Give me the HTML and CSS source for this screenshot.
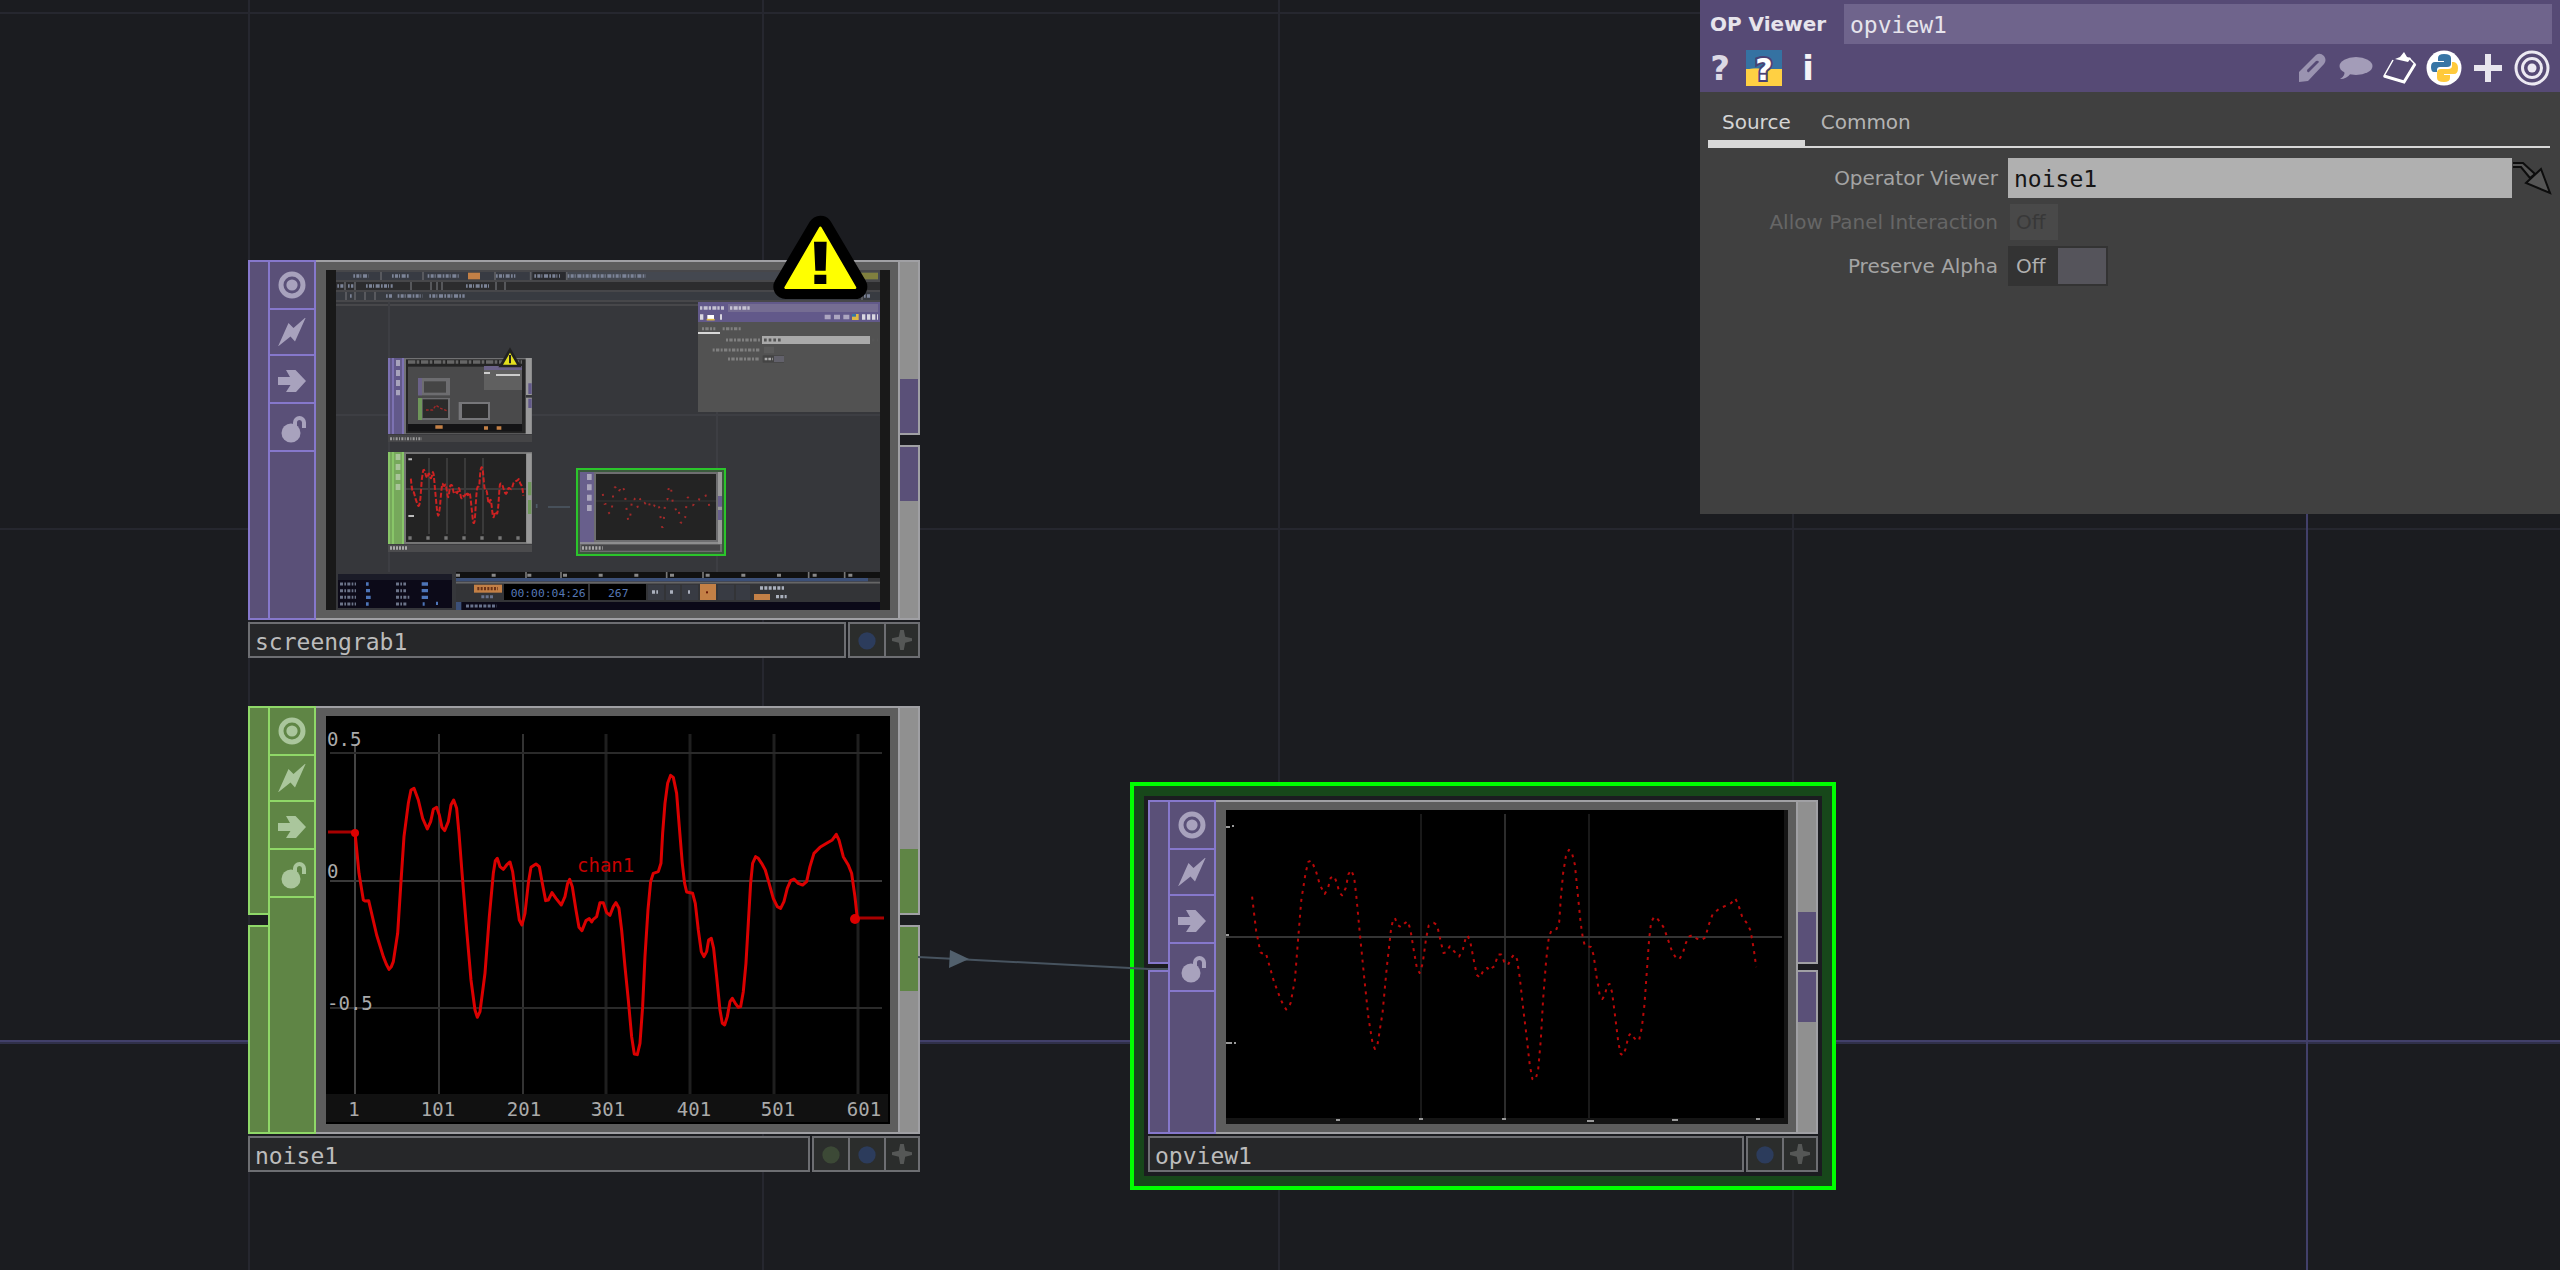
FILE: index.html
```html
<!DOCTYPE html>
<html lang="en">
<head>
<meta charset="utf-8">
<title>Network editor</title>
<link rel="stylesheet" href="styles.css">
</head>
<body>
<svg class="defs" aria-hidden="true">
  <defs>
    <symbol id="i-viewer" viewBox="0 0 28 28"><circle cx="14" cy="14" r="11" fill="none" stroke="currentColor" stroke-width="5"/><circle cx="14" cy="14" r="5.6" fill="currentColor"/></symbol>
    <symbol id="i-bolt" viewBox="0 0 28 28"><path d="M28 -1L17 23.500L12.500 18.500L0 28.500L10.500 5L15.500 10Z" fill="currentColor"/></symbol>
    <symbol id="i-arrow" viewBox="0 0 28 28"><path d="M0 10H12L8 3H17.500L28 14L18 25H8L12.500 18H0Z" fill="currentColor"/></symbol>
    <symbol id="i-lock" viewBox="0 0 28 28"><circle cx="13" cy="18" r="9.500" fill="currentColor"/><path d="M17 11V7.500a4.500 4.500 0 0 1 9 0V13" fill="none" stroke="currentColor" stroke-width="4"/></symbol>
    <symbol id="i-dot" viewBox="0 0 22 22"><circle cx="11" cy="12" r="9.500" fill="currentColor"/></symbol>
    <symbol id="i-star" viewBox="0 0 22 22"><path d="M9 0H13L14.500 7.500L22 9V12L14.500 14L13 22H9L7.500 14L0 12V9L7.500 7.500Z" fill="currentColor"/></symbol>
    <path id="curve" fill="none" stroke-linejoin="round" vector-effect="non-scaling-stroke" d="M87 349L99 472L112 552L117 555L128 554L152 657L172 722L181 745L189 760L196 752L202 737L215 652L224 512L234 362L247 262L255 222L264 217L277 252L290 307L304 339L314 317L322 280L332 274L340 297L348 334L356 344L367 317L375 267L383 252L392 277L399 352L409 482L422 642L435 792L447 882L454 904L462 887L477 772L490 602L502 472L508 434L514 427L522 452L532 460L542 447L552 438L560 467L570 542L580 612L588 627L597 592L607 502L615 454L630 444L640 452L650 507L659 554L667 552L678 530L690 547L706 567L717 542L725 502L731 490L739 512L750 582L759 634L768 644L780 614L790 608L797 618L802 610L812 602L822 560L832 560L842 590L852 598L862 572L870 560L879 577L887 642L897 752L907 852L917 962L925 1014L934 1016L942 982L950 872L957 722L966 582L974 497L982 472L997 467L1005 442L1010 352L1017 262L1025 202L1034 178L1042 184L1052 232L1060 332L1069 442L1076 502L1082 528L1100 532L1108 562L1117 642L1126 707L1134 722L1142 707L1148 672L1156 667L1163 697L1172 782L1182 882L1189 922L1196 927L1204 902L1212 857L1219 847L1228 862L1237 874L1244 872L1252 827L1260 742L1267 622L1274 502L1280 442L1289 422L1297 427L1307 442L1318 462L1328 497L1342 547L1354 572L1364 577L1374 557L1384 517L1394 494L1404 489L1417 502L1430 507L1442 497L1452 452L1464 412L1482 394L1502 382L1519 372L1531 355L1539 372L1552 422L1567 447L1577 472L1587 542L1594 606"/>
  </defs>
</svg>

<main class="network">
  <section class="selection">
    <article class="node node-top">
      <div class="node-main">
        <div class="inputs"><span class="port"></span><span class="port"></span></div>
        <div class="toolbar">
          <button aria-label="Viewer active"><svg><use href="#i-viewer"/></svg></button>
          <button aria-label="Bypass"><svg><use href="#i-bolt"/></svg></button>
          <button aria-label="Cook"><svg><use href="#i-arrow"/></svg></button>
          <button aria-label="Lock"><svg><use href="#i-lock"/></svg></button>
        </div>
        <div class="body">
          <svg class="viewer" viewBox="0 0 562 314">
            <rect width="562" height="314" fill="#000"/>
            <path d="M0 308H562V314H0ZM558 0H562V314H558Z" fill="#151515"/>
            <path d="M195 4V308M363 4V308" stroke="#191919" stroke-width="2"/>
            <path d="M279 4V308" stroke="#2c2c2c" stroke-width="2"/>
            <path d="M0 127H556" stroke="#343434" stroke-width="2"/>
            <use href="#curve" transform="translate(-3 -9) scale(.3345 .2743)" stroke="#b80808" stroke-width="2" stroke-dasharray="3 5"/>
            <path d="M0 17H4M6 16H8M0 125H3M0 233H6M8 233H10M110 310H114M193 309H197M276 309H280M361 311H368M446 310H452M530 309H534" stroke="#999" stroke-width="2"/>
          </svg>
        </div>
        <div class="outputs"><span class="port"></span><span class="port"></span></div>
      </div>
      <div class="node-foot">
        <div class="name">opview1</div>
        <div class="flags">
          <button class="blue" aria-label="Display"><svg><use href="#i-dot"/></svg></button>
          <button class="grey" aria-label="Activate viewer"><svg><use href="#i-star"/></svg></button>
        </div>
      </div>
    </article>
  </section>

  <article class="node node-top node-grab">
    <div class="node-main">
      <div class="inputs"><span class="port"></span></div>
      <div class="toolbar">
        <button aria-label="Viewer active"><svg><use href="#i-viewer"/></svg></button>
        <button aria-label="Bypass"><svg><use href="#i-bolt"/></svg></button>
        <button aria-label="Cook"><svg><use href="#i-arrow"/></svg></button>
        <button aria-label="Lock"><svg><use href="#i-lock"/></svg></button>
      </div>
      <div class="body">
        <svg class="viewer" viewBox="0 0 1692 1020">
          <rect width="1692" height="1020" fill="#191919"/>
          <rect x="30" width="1632" height="1020" fill="#36373b"/>
          <!-- menu and pane bars -->
          <path d="M30 6H1662V30H30Z" fill="#383b43"/><path d="M720 6H1662V30H720Z" fill="#444850"/><path d="M620 6H720V30H620Z" fill="#2a2b2f"/>
          <path d="M30 36H1662V60H30Z" fill="#2c2c2e"/>
          <path d="M30 66H1662V90H30Z" fill="#383b41"/>
          <path d="M30 3H1662M30 33H1662M30 63H1662M30 93H1662M30 105H1662" stroke="#4d4d50" stroke-width="4"/>
          <path d="M165 6V30M291 6V30M507 6V30M614 6V30M722 6V30M57 36V60M87 36V60M255 36V60M315 36V60M333 36V60M348 36V60M510 36V60M537 36V60M60 66V90M87 66V90M117 66V90M147 66V90M1608 66V90" stroke="#5f6065" stroke-width="5"/>
          <rect x="426" y="8" width="36" height="20" fill="#c38046"/>
          <rect x="1590" y="8" width="66" height="20" fill="#80803f"/>
          <g stroke="#7c8498" stroke-width="10" fill="none" stroke-dasharray="5 4 9 3 3 5 12 4">
            <path d="M82 18H128M198 18H252M305 18H398M510 18H568M625 18H702M725 18H960"/>
            <path d="M34 48H52M66 48H82M120 48H200M420 48H492"/>
            <path d="M72 78H80M180 78H200M215 78H290M310 78H416M1614 78H1632"/>
          </g>
          <!-- grid -->
          <path d="M189 95V906M1173 426V906M30 435H1662" stroke="#3d3e43" stroke-width="6"/>
          <!-- nested screengrab node -->
          <rect x="186" y="264" width="432" height="228" fill="#717173"/><rect x="186" y="264" width="48" height="228" fill="#62598a"/>
          <path d="M189 264V492M201 264V492M231 264V492" stroke="#8278ba" stroke-width="5"/>
          <rect x="240" y="268" width="362" height="222" fill="#242424"/><rect x="246" y="290" width="342" height="172" fill="#4a4a4b"/>
          <path d="M246 276H588" stroke="#666" stroke-width="10" stroke-dasharray="22 4 8 5"/>
          <rect x="276" y="324" width="96" height="52" fill="#6d6d70"/><rect x="276" y="324" width="12" height="52" fill="#6b6288"/><rect x="294" y="334" width="66" height="34" fill="#454545"/>
          <rect x="276" y="384" width="96" height="66" fill="#6d6d70"/><rect x="276" y="384" width="12" height="66" fill="#6f975a"/><rect x="290" y="388" width="76" height="56" fill="#2b2b2b"/>
          <path d="M300 420h20l10-14 12 8 20 8" stroke="#a02828" stroke-width="4" fill="none" stroke-dasharray="8 5"/>
          <rect x="398" y="396" width="94" height="54" fill="#77777a"/><rect x="408" y="402" width="78" height="42" fill="#2c2c2c"/>
          <rect x="474" y="288" width="114" height="72" fill="#606060"/><rect x="474" y="288" width="114" height="12" fill="#6b6288"/>
          <path d="M474 309H492M510 315H582" stroke="#ccc" stroke-width="6"/>
          <rect x="246" y="462" width="342" height="22" fill="#141416"/><path d="M328 471H350M474 474H486M512 474H526" stroke="#c38046" stroke-width="10"/>
          <path d="M608 264V492" stroke="#999" stroke-width="18"/><path d="M612 340V372M612 386V414" stroke="#62598a" stroke-width="10"/><path d="M600 379H618" stroke="#36373b" stroke-width="8"/>
          <path d="M216 270V376" stroke="#a8a4bd" stroke-width="12" stroke-dasharray="18 12"/>
          <rect x="186" y="494" width="432" height="22" fill="#454547"/><path d="M192 506H288" stroke="#999" stroke-width="9" stroke-dasharray="6 4 3 4"/>
          <path d="M552 240L580 288H524Z" fill="#e4e01e" stroke="#222" stroke-width="8"/><path d="M552 255V280" stroke="#222" stroke-width="6"/>
          <!-- nested noise node -->
          <rect x="186" y="546" width="432" height="276" fill="#757575"/><rect x="186" y="546" width="48" height="276" fill="#76a85b"/>
          <path d="M189 546V822M201 546V822M231 546V822" stroke="#8dcc6c" stroke-width="5"/>
          <rect x="240" y="552" width="360" height="264" fill="#232323"/>
          <path d="M309 564V792M363 564V792M417 564V792M471 564V792M240 657H600" stroke="#3a3a3a" stroke-width="6"/>
          <use href="#curve" transform="translate(235 556) scale(.224 .2)" stroke="#cc2222" stroke-width="2" stroke-dasharray="5 2"/>
          <path d="M247 804H592" stroke="#777" stroke-width="10" stroke-dasharray="10 44"/><path d="M247 568H258M247 738H264" stroke="#bbb" stroke-width="6"/>
          <path d="M216 552V666" stroke="#a9c49a" stroke-width="14" stroke-dasharray="18 12"/>
          <path d="M609 550V820" stroke="#989898" stroke-width="16"/><path d="M611 636V676M611 690V732" stroke="#6f975a" stroke-width="10"/>
          <rect x="186" y="824" width="432" height="22" fill="#4b4b4d"/><path d="M192 834H246" stroke="#aaa" stroke-width="10" stroke-dasharray="6 3"/>
          <path d="M666 711H732M632 702V714" stroke="#4d5a66" stroke-width="5"/>
          <!-- nested viewer node -->
          <rect x="753" y="597" width="444" height="258" fill="#3a5a3c" stroke="#2bc52b" stroke-width="6"/>
          <rect x="762" y="606" width="426" height="240" fill="#6e6e70"/><rect x="762" y="606" width="42" height="216" fill="#685f8c"/>
          <path d="M790 612V732" stroke="#aaa5bc" stroke-width="14" stroke-dasharray="18 13"/>
          <rect x="810" y="612" width="360" height="198" fill="#232323"/><path d="M810 693H1170" stroke="#303030" stroke-width="5"/>
          <use href="#curve" transform="translate(812 619) scale(.212 .15)" stroke="#a02a2a" stroke-width="2" stroke-dasharray="2 8"/>
          <path d="M1182 606V822" stroke="#999" stroke-width="12"/><path d="M1182 678V710M1182 720V750" stroke="#685f8c" stroke-width="12"/>
          <path d="M762 819H1188" stroke="#999" stroke-width="5"/><rect x="766" y="824" width="416" height="18" fill="#454547"/><path d="M768 834H830" stroke="#aaa" stroke-width="10" stroke-dasharray="6 4"/>
          <!-- nested parameter panel -->
          <rect x="1116" y="96" width="546" height="330" fill="#525252"/><rect x="1116" y="96" width="546" height="60" fill="#62598a"/><rect x="1206" y="102" width="450" height="24" fill="#756d92"/>
          <path d="M1122 114H1194M1212 114H1272" stroke="#c5c2d2" stroke-width="11" stroke-dasharray="7 4 12 3"/>
          <path d="M1122 141H1132M1182 141H1188M1608 141H1656" stroke="#d8d6e0" stroke-width="16" stroke-dasharray="10 5"/>
          <path d="M1496 141H1570" stroke="#aca6c0" stroke-width="14" stroke-dasharray="18 10"/>
          <path d="M1144 141H1164" stroke="#fff" stroke-width="12"/><path d="M1142 149H1166" stroke="#ddb845" stroke-width="5"/>
          <path d="M1578 141H1598" stroke="#ddb845" stroke-width="18"/><path d="M1578 136H1590" stroke="#3775a5" stroke-width="8"/>
          <path d="M1128 176H1168M1190 176H1248M1200 210H1302M1160 240H1302M1206 267H1302" stroke="#808080" stroke-width="9" stroke-dasharray="6 4 10 4"/>
          <path d="M1116 189H1182" stroke="#d8d8d8" stroke-width="6"/><rect x="1308" y="198" width="324" height="24" fill="#a9a9a9"/>
          <rect x="1314" y="230" width="30" height="20" fill="#5b5b5b"/><rect x="1310" y="256" width="64" height="22" fill="#444"/><rect x="1344" y="258" width="30" height="18" fill="#62616b"/>
          <path d="M1314 210H1368M1638 210H1656" stroke="#555" stroke-width="9" stroke-dasharray="8 6"/><path d="M1316 267H1340" stroke="#aaa" stroke-width="8" stroke-dasharray="8 3"/>
          <!-- timeline -->
          <rect x="30" y="906" width="1632" height="114" fill="#36373b"/><rect x="36" y="912" width="342" height="102" fill="#0c0a18"/><rect x="36" y="912" width="342" height="18" fill="#1b1c28"/>
          <path d="M42 942H90M42 962H90M42 982H90M42 1002H90M210 942H240M210 962H240M210 982H252M210 1002H245" stroke="#6b7388" stroke-width="9" stroke-dasharray="9 4 5 4"/>
          <path d="M120 942H128M120 962H132M120 982H134M120 1002H128M287 942H306M287 962H306M287 982H306M290 1002H296M330 1000H336" stroke="#4d75b8" stroke-width="10"/>
          <rect x="390" y="906" width="1272" height="18" fill="#111"/><rect x="390" y="924" width="1236" height="10" fill="#3c5078"/>
          <path d="M390 938H1662" stroke="#666" stroke-width="5"/><path d="M390 916H1656" stroke="#888" stroke-width="9" stroke-dasharray="12 95"/>
          <path d="M600 906V924M705 906V924M1022 906V924M1131 906V924M1448 906V924M1556 906V924" stroke="#777" stroke-width="5"/>
          <rect x="390" y="942" width="1272" height="54" fill="#333437"/><rect x="390" y="996" width="1272" height="24" fill="#0b0918"/><rect x="390" y="996" width="16" height="24" fill="#3c5078"/>
          <rect x="444" y="944" width="84" height="24" fill="#c38046"/><path d="M454 956H516" stroke="#6b3318" stroke-width="10" stroke-dasharray="6 4"/><path d="M466 980H504M420 1008H512" stroke="#68728c" stroke-width="9" stroke-dasharray="9 4"/>
          <rect x="534" y="942" width="252" height="48" fill="#000"/><rect x="792" y="942" width="168" height="48" fill="#000"/>
          <g class="digits"><text x="554" y="980">00:00:04:26</text><text x="846" y="980">267</text></g>
          <path d="M966 944H1014V990H966ZM1020 944H1062V990H1020ZM1068 944H1116V990H1068ZM1176 944H1224V990H1176ZM1230 944H1272V990H1230Z" fill="#383b43"/>
          <rect x="1122" y="942" width="48" height="48" fill="#c38046"/><path d="M978 966H996M1032 966H1044M1086 966H1092M1302 954H1374M1350 980H1382" stroke="#aab0bd" stroke-width="10" stroke-dasharray="9 4"/>
          <rect x="1140" y="964" width="6" height="6" fill="#6b1a08"/><rect x="1284" y="972" width="48" height="18" fill="#c38046"/>
        </svg>
      </div>
      <div class="outputs"><span class="port"></span><span class="port"></span></div>
    </div>
    <div class="node-foot">
      <div class="name">screengrab1</div>
      <div class="flags">
        <button class="blue" aria-label="Display"><svg><use href="#i-dot"/></svg></button>
        <button class="grey" aria-label="Activate viewer"><svg><use href="#i-star"/></svg></button>
      </div>
    </div>
    <svg class="warning" viewBox="0 0 294 264" role="img" aria-label="Warning">
      <path d="M148 48L44 224H252Z" stroke="#000" stroke-width="74" stroke-linejoin="round"/>
      <path d="M148 48L44 227H252Z" fill="#ff0" stroke="#ff0" stroke-width="8" stroke-linejoin="round"/>
      <path d="M129 89H167L164 176H133ZM130 188H166V216H130Z"/>
    </svg>
  </article>

  <article class="node node-chop node-noise">
    <div class="node-main">
      <div class="inputs"><span class="port"></span><span class="port"></span></div>
      <div class="toolbar">
        <button aria-label="Viewer active"><svg><use href="#i-viewer"/></svg></button>
        <button aria-label="Bypass"><svg><use href="#i-bolt"/></svg></button>
        <button aria-label="Cook"><svg><use href="#i-arrow"/></svg></button>
        <button aria-label="Lock"><svg><use href="#i-lock"/></svg></button>
      </div>
      <div class="body">
        <svg class="viewer" viewBox="0 0 564 408">
          <rect width="564" height="408" fill="#000"/>
          <rect y="378" width="562" height="28" fill="#111"/>
          <path d="M29 30V378" stroke="#444" stroke-width="2"/>
          <path d="M113 18V378M197 18V378" stroke="#333" stroke-width="2"/>
          <path d="M280 18V378M364 18V378M448 18V378M532 18V378" stroke="#1f1f1f" stroke-width="3"/>
          <path d="M4 37H556M4 292H556" stroke="#2a2a2a" stroke-width="2"/><path d="M4 165H556" stroke="#3a3a3a" stroke-width="2"/>
          <path d="M2 116H29M530 202H558" stroke="#a80000" stroke-width="3"/>
          <use href="#curve" transform="scale(.3333)" stroke="#db0000" stroke-width="3"/>
          <circle cx="29" cy="117" r="4" fill="#db0000"/><circle cx="529" cy="203" r="5" fill="#db0000"/>
          <g class="axis"><text x="1" y="30">0.5</text><text x="1" y="162">0</text><text x="1" y="294">-0.5</text></g>
          <g class="axis axis-x"><text x="28" y="400">1</text><text x="112" y="400">101</text><text x="198" y="400">201</text><text x="282" y="400">301</text><text x="368" y="400">401</text><text x="452" y="400">501</text><text x="538" y="400">601</text></g>
          <text class="channel" x="251" y="156">chan1</text>
        </svg>
      </div>
      <div class="outputs"><span class="port"></span><span class="port"></span></div>
    </div>
    <div class="node-foot">
      <div class="name">noise1</div>
      <div class="flags">
        <button class="green" aria-label="Export"><svg><use href="#i-dot"/></svg></button>
        <button class="blue" aria-label="Display"><svg><use href="#i-dot"/></svg></button>
        <button class="grey" aria-label="Activate viewer"><svg><use href="#i-star"/></svg></button>
      </div>
    </div>
  </article>

  <svg class="wire" viewBox="0 0 250 30" aria-hidden="true"><path d="M0 7L231 19H250" fill="none" stroke="#47535f" stroke-width="2"/><path d="M32 0L51 9L31 18Z" fill="#52606d"/></svg>

  <aside class="panel">
    <header>
      <div class="title"><label for="opname">OP Viewer</label><input id="opname" value="opview1"></div>
      <div class="tools">
        <button class="help" aria-label="Help">?</button>
        <button class="pyhelp" aria-label="Python help"><span>?</span></button>
        <button class="info" aria-label="Info">i</button>
        <span class="spacer"></span>
        <button aria-label="Edit"><svg viewBox="0 0 36 36"><path d="M5 32V22L22 5Q26 2 30 6Q33 10 30 14L14 31Z" fill="#9a93b0"/><path d="M13 20L22 11Q24 10 25 12L15 22Q13 23 13 20Z" fill="#564a75"/></svg></button>
        <button aria-label="Comment"><svg viewBox="0 0 36 36"><ellipse cx="18" cy="16" rx="16.500" ry="9" fill="#a39cb8"/><path d="M6 20Q8 26 2 29Q9 29 13 23Z" fill="#a39cb8"/></svg></button>
        <button aria-label="Tags"><svg viewBox="0 0 36 36"><path d="M11 10L2 26L22 32L33 14L27 8" fill="none" stroke="#fff" stroke-width="1.500"/><path d="M2 26L22 32L33 14" fill="none" stroke="#fff" stroke-width="3"/><path d="M13 9L18 7L22 2L25 7L29 8L26 12Z" fill="#fff"/></svg></button>
        <button aria-label="Python"><svg viewBox="0 0 36 36"><circle cx="18" cy="18" r="17.500" fill="#fff"/><path d="M12 8Q12 4 18 4Q25 4 25 8V14Q25 17 21 17H14Q11 17 11 20V22H8Q5 22 5 17Q5 12 9 12H18V11H12Z" fill="#3775a5"/><path d="M24 28Q24 32 18 32Q11 32 11 28V23Q11 19 15 19H22Q26 19 26 16V12H28Q32 13 32 18Q32 24 28 24H18V25H24Z" fill="#ffca3c"/></svg></button>
        <button aria-label="Add"><svg viewBox="0 0 36 36"><path d="M18 4V32M4 18H32" stroke="#e8e6ee" stroke-width="6"/></svg></button>
        <button aria-label="Viewer"><svg viewBox="0 0 36 36"><g fill="none" stroke="#ece9f2" stroke-width="3"><circle cx="18" cy="18" r="16"/><circle cx="18" cy="18" r="9.500"/></g><circle cx="18" cy="18" r="4.500" fill="#ece9f2"/></svg></button>
      </div>
    </header>
    <nav class="tabs"><button class="active">Source</button><button>Common</button></nav>
    <form class="params">
      <label for="viewer">Operator Viewer</label>
      <div class="field"><input id="viewer" value="noise1"><button type="button" aria-label="Go to operator"><svg viewBox="0 0 40 36"><path d="M1 3H11L23 14L18 18L9 7H1" fill="#555" stroke="#0d0d0d" stroke-width="2"/><path d="M29 9L38 33L14 23Z" fill="#555" stroke="#0d0d0d" stroke-width="2"/></svg></button></div>
      <label for="interact" class="off">Allow Panel Interaction</label>
      <div class="toggle disabled"><span>Off</span><input type="checkbox" id="interact" disabled></div>
      <label for="alpha">Preserve Alpha</label>
      <div class="toggle"><span>Off</span><input type="checkbox" id="alpha"></div>
    </form>
  </aside>
</main>
</body>
</html>
```
FILE: styles.css
```css
* { box-sizing: border-box; }
html, body { height: 100%; margin: 0; }
body { background: #1b1c20; color: #bbb; font-family: "DejaVu Sans", sans-serif; font-size: 20px; overflow: hidden; }
button, input { margin: 0; padding: 0; border: 0; border-radius: 0; background: none; color: inherit; font: inherit; outline: none; }
svg { display: block; }
.defs { position: absolute; width: 0; height: 0; }

.network {
  --grid: linear-gradient(#26272f, #26272f);
  position: relative;
  min-height: 100%;
  background:
    linear-gradient(#42406a, #42406a) 2306px 0 / 2px 100% no-repeat,
    linear-gradient(#42406a 50%, #30304a 50%) 0 1040px / 100% 4px no-repeat,
    var(--grid) 248px 0 / 2px 100% no-repeat,
    var(--grid) 762px 0 / 2px 100% no-repeat,
    var(--grid) 1278px 0 / 2px 100% no-repeat,
    var(--grid) 1792px 0 / 2px 100% no-repeat,
    var(--grid) 0 12px / 100% 2px no-repeat,
    var(--grid) 0 528px / 100% 2px no-repeat,
    #1b1c20;
}

/* operator nodes */
.node { --fill: #5a5078; --line: #8678cc; --glyph: #a8a2bd; width: 672px; display: flex; flex-direction: column; gap: 2px; }
.node-chop { --fill: #5f8545; --line: #8fd868; --glyph: #aac69c; }
.node-grab { position: absolute; left: 248px; top: 260px; }
.node-noise { position: absolute; left: 248px; top: 706px; }
.selection { position: absolute; left: 1130px; top: 782px; border: 4px solid #0f0; background: #17471a; padding: 10px; }
.selection .node { width: 678px; padding: 4px; background: #1b1c20; }

.node-main { display: grid; grid-template-columns: 20px 48px 1fr 20px; }
.inputs, .outputs { display: flex; flex-direction: column; gap: 10px; }
.selection .inputs, .selection .outputs { gap: 6px; }
.port { flex: 1; }
.inputs .port { background: var(--fill); border: 2px solid var(--line); border-right: 0; }
.outputs .port { border: 2px solid #a0a0a4; border-left: 0; background: linear-gradient(var(--fill), var(--fill)) bottom / 100% var(--plug) no-repeat #909090; }
.outputs .port + .port { background-position: top; }
.node-grab .outputs { --plug: 54px; }
.node-noise .outputs { --plug: 64px; }
.selection .outputs { --plug: 50px; }
.toolbar { background: var(--fill); border: 2px solid var(--line); color: var(--glyph); }
.toolbar button { display: flex; width: 100%; height: 48px; align-items: center; justify-content: center; border-bottom: 2px solid var(--line); }
.toolbar button:nth-child(2) { height: 46px; }
.toolbar button:nth-child(n+3) { padding-top: 4px; }
.toolbar svg { width: 28px; height: 28px; overflow: visible; }
.body { background: #5d5d5d; border: 2px solid #a0a0a4; border-left: 0; padding: 8px 8px 8px 10px; }
.viewer { width: 100%; height: auto; }
.node-foot { display: flex; gap: 2px; height: 36px; }
.name { flex: 1; padding-left: 5px; border: 2px solid #6d6e72; background: #262729; color: #bcbcbc; font: 23px/36px "DejaVu Sans Mono", monospace; }
.flags { display: flex; border: 2px solid #6d6e72; background: #2b2d2c; }
.flags button { display: grid; place-items: center; width: 34px; }
.flags button + button { border-left: 2px solid #6d6e72; }
.flags svg { width: 20px; height: 20px; }
.flags .blue { color: #2c3c5c; width: 36px; }
.flags .green { color: #3c4936; }
.flags .grey { color: #555756; }
.flags button:first-child { width: 34px; }
.warning { position: absolute; left: 523px; top: -48px; width: 98px; height: 88px; overflow: visible; }
.wire { position: absolute; left: 918px; top: 950px; width: 250px; height: 30px; }
.axis text, .channel { font: 19px "DejaVu Sans Mono", monospace; fill: #aaa; }
.axis-x text { text-anchor: middle; }
.channel { fill: #c80000; }
.digits text { font: 34px "DejaVu Sans Mono", monospace; fill: #5577b5; }

/* parameter window */
.panel { position: absolute; right: 0; top: 0; width: 860px; height: 514px; background: #404040; }
.panel header { height: 92px; padding: 4px 8px 6px 10px; background: #564a75; }
.title { display: flex; align-items: center; gap: 16px; color: #e6e4ec; }
.title label { width: 118px; font-weight: bold; white-space: nowrap; }
.title input { flex: 1; height: 40px; padding: 2px 6px 0; background: #6f648c; }
.title input, .field input { font: 23px "DejaVu Sans Mono", monospace; }
.tools { display: flex; align-items: center; gap: 8px; height: 48px; color: #f4f3f7; font-size: 34px; font-weight: bold; line-height: 36px; padding-right: 2px; }
.tools button { width: 36px; height: 36px; }
.tools svg { width: 36px; height: 36px; }
.tools .help, .tools .info { width: 20px; }
.tools .help { color: #dcd9e5; }
.tools .pyhelp { margin: 0 8px; background: radial-gradient(ellipse 30px 20px at 10px 38px, #ffd043 96%, transparent) , linear-gradient(#3572a2 52%, #ffd043 52%); }
.pyhelp span { font-size: 30px; color: #fff; -webkit-text-stroke: 4px #4a4275; paint-order: stroke fill; }
.spacer { flex: 1; }
.tabs { display: flex; margin: 0 10px 0 8px; height: 56px; box-shadow: inset 0 -2px #d8d8d8; }
.tabs button { padding: 12px 14px 0; color: #b4b4b4; border-bottom: 8px solid transparent; }
.tabs button + button { padding-left: 16px; }
.tabs .active { color: #d4d4d4; border-color: #d8d8d8; }
.params { display: grid; grid-template-columns: 298px 1fr; grid-template-rows: 40px 36px 40px; gap: 6px 10px; align-items: center; padding-top: 10px; color: #a4a4a4; }
.params > label { text-align: right; }
.params .off { color: #666; }
.field { display: flex; padding-right: 8px; }
.field input { flex: 1; height: 40px; padding: 2px 6px 0; background: #b0b0b0; color: #161616; }
.field button svg { width: 40px; height: 36px; }
.toggle { display: flex; width: 100px; padding: 2px; background: #333; color: #b0b0b0; line-height: 36px; }
.toggle span { width: 48px; padding-left: 6px; }
.toggle input { appearance: none; width: 48px; height: 36px; background: #55545b; }
.toggle.disabled { background: none; padding: 0 2px; color: #383838; }
.toggle.disabled span { background: #494949; }
.toggle.disabled input { background: none; }
```
